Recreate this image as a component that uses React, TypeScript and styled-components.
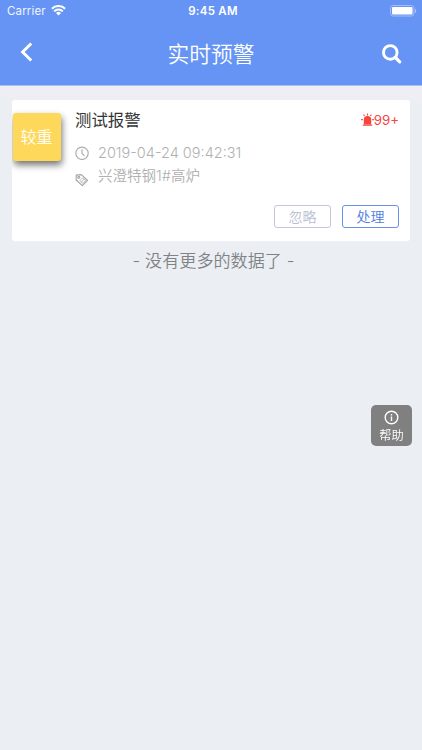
import React from "react";
import styled, { createGlobalStyle } from "styled-components";

const GlobalStyle = createGlobalStyle`
  * { box-sizing: border-box; }
  html, body, #root { height: 100%; }
  body {
    margin: 0;
    background: #ebeff4;
    font-family: Inter, "Noto Sans CJK SC", sans-serif;
    overflow: hidden;
  }
  button { font: inherit; padding: 0; background: none; border: 0; }
`;

const Screen = styled.div`
  min-height: 100%;
  display: flex;
  flex-direction: column;
  background: linear-gradient(#eeeef4 86px, #eeeef4 98px, #ebeff4 104px);
`;

const Header = styled.header`
  height: 86px;
  background: #6694f4;
  border-bottom: 1px solid #a9c0f3;
  color: #fff;
`;

const StatusBar = styled.div`
  height: 22px;
  padding: 0 5px 0 7px;
  display: grid;
  grid-template-columns: 1fr auto 1fr;
  align-items: center;
  font-size: 11.5px;
  line-height: 22px;
`;

const Carrier = styled.div`
  display: flex;
  align-items: center;
  gap: 5px;
  letter-spacing: 0.15px;
  color: #f0f5ff;
`;

const Clock = styled.div`
  margin-left: 2px;
  font-weight: 600;
  letter-spacing: 0.25px;
`;

const BatterySlot = styled.div`
  display: flex;
  justify-content: flex-end;
`;

const NavBar = styled.div`
  height: 63px;
  padding: 0 20px;
  display: grid;
  grid-template-columns: 1fr auto 1fr;
  align-items: center;
`;

const NavButton = styled.button<{ $end?: boolean }>`
  display: flex;
  justify-self: ${(p) => (p.$end ? "end" : "start")};
  padding-bottom: ${(p) => (p.$end ? 0 : 4)}px;
  color: #fff;
`;

const Title = styled.h1`
  margin: 0;
  font-size: 21.8px;
  line-height: 32px;
  font-weight: 350;
`;

const Card = styled.article`
  margin: 14px 12px 0;
  height: 141px;
  padding: 0 11px 0 1px;
  display: flex;
  background: #fff;
  border-radius: 3px;
  overflow: hidden;
`;

const Level = styled.div`
  flex: none;
  width: 48px;
  height: 48px;
  margin: 12.5px 14px 0 0;
  background: #fed85b;
  border-radius: 3px;
  box-shadow: 1px 4px 7px rgba(0, 0, 0, 0.55);
  color: #fff;
  font-size: 16px;
  line-height: 48px;
  text-align: center;
  text-indent: -1px;
  font-weight: 350;
`;

const Body = styled.div`
  flex: 1;
  display: flex;
  flex-direction: column;
`;

const Heading = styled.div`
  height: 38px;
  display: flex;
  align-items: center;
  justify-content: space-between;
  font-size: 16.4px;
  color: #333;
`;

const Count = styled.div`
  display: flex;
  align-items: center;
  color: #f8443f;
  font-size: 13.3px;
  line-height: 20px;
  padding-top: 1px;
`;

const Info = styled.div`
  height: 22px;
  display: flex;
  align-items: center;
  gap: 9px;
  color: #b0b0b0;
  font-size: 14.5px;
  font-weight: 350;
`;

const InfoList = styled.div`
  padding-top: 4px;
`;

const IconSlot = styled.span<{ $drop?: number }>`
  display: flex;
  width: 14px;
  padding-top: ${(p) => p.$drop ?? 0}px;
`;

const InfoText = styled.span`
  padding-bottom: 2px;
`;

const Actions = styled.div`
  margin-top: 19px;
  display: flex;
  justify-content: flex-end;
  gap: 11px;
`;

const Action = styled.button<{ $primary?: boolean }>`
  width: 57px;
  height: 23px;
  border: 1px solid ${(p) => (p.$primary ? "#6790ec" : "#c3c7dc")};
  border-radius: 3px;
  color: ${(p) => (p.$primary ? "#4f7be0" : "#b9bed2")};
  font-size: 14px;
  font-weight: 350;
  line-height: 20px;
`;

const EndNote = styled.p`
  margin: 8px 0 0 5px;
  font-size: 17.1px;
  line-height: 24px;
  font-weight: 350;
  color: #808285;
  text-align: center;
`;

const Help = styled.button`
  position: fixed;
  left: 371px;
  top: 405px;
  width: 41px;
  height: 41px;
  padding-top: 5px;
  display: flex;
  flex-direction: column;
  align-items: center;
  gap: 2px;
  border-radius: 5px;
  background: #808080;
  color: #fff;
  font-size: 12.2px;
  font-weight: 350;
  line-height: 18px;
`;

const WifiIcon = () => (
  <svg width="15" height="12" viewBox="0 0 15 12" fill="none" stroke="#fff" strokeWidth="2">
    <path d="M.9 3.7a9.4 9.4 0 0 1 13.2 0M3.2 6.4a6 6 0 0 1 8.6 0" />
    <path d="M7.5 10.4 5 8a3.5 3.5 0 0 1 5 0Z" fill="#fff" stroke="none" />
  </svg>
);

const BatteryIcon = () => (
  <svg width="27" height="12" viewBox="0 0 27 12">
    <rect x=".5" y=".5" width="23.5" height="10.5" rx="2.6" fill="none" stroke="#a3bef9" />
    <rect x="2" y="2" width="20.5" height="7.5" rx="1" fill="#fff" />
    <path d="M25 4v4c1.7-.6 1.7-3.4 0-4Z" fill="#b1c8fa" />
  </svg>
);

const BackIcon = () => (
  <svg width="13" height="20" viewBox="0 0 13 20" fill="none" stroke="#fff" strokeWidth="2.9">
    <path d="m11.2 1.5-8.6 8.5 8.6 8.5" />
  </svg>
);

const SearchIcon = () => (
  <svg width="20" height="20" viewBox="0 0 20 20" fill="none" stroke="#fff">
    <circle cx="8.3" cy="8.4" r="6.8" strokeWidth="2.9" />
    <path d="m13.4 13.5 4.3 4.3" strokeWidth="3.2" strokeLinecap="round" />
  </svg>
);

const ClockIcon = () => (
  <svg width="14" height="14" viewBox="0 0 14 14" fill="none" stroke="#aaa" strokeWidth="1.1">
    <circle cx="7" cy="7.3" r="6.2" />
    <path d="M7 3.3v4.2l2.5 2.3" />
  </svg>
);

const TagIcon = () => (
  <svg width="14" height="14" viewBox="0 0 14 14" fill="none" stroke="#a4a4a4" strokeWidth="1.1">
    <path d="M1.2 7V2.1L6.4 1.6 12.6 7.3 7.3 12.7Z" strokeLinejoin="round" />
    <circle cx="3.8" cy="4.2" r="1" />
    <path d="m5 7.5 2.9-2.9 3 2.9-3.2 3.1ZM6.4 9l3-3" strokeWidth=".8" />
  </svg>
);

const AlarmIcon = () => (
  <svg width="13" height="14" viewBox="0 0 13 14" fill="#f8443f">
    <path d="M2.8 11.2V6.7a3.7 3.7 0 0 1 7.4 0v4.5ZM1.8 11.4h9.4V12.8H1.8Z" />
    <path
      d="M6.5.4v2M2.6 1.6l1 1.4M10.4 1.6l-1 1.4M.1 6.6h1.7M11.2 6.6h1.7"
      fill="none"
      stroke="#f8443f"
      strokeWidth="1.1"
    />
  </svg>
);

const InfoIcon = () => (
  <svg width="15" height="15" viewBox="0 0 15 15" fill="none" stroke="#fff" strokeWidth="1.4">
    <circle cx="7.5" cy="7.5" r="6.3" />
    <path d="M7.5 6.6v4.3M7.5 4v1.4" />
  </svg>
);

export default function App() {
  return (
    <Screen>
      <GlobalStyle />
      <Header>
        <StatusBar>
          <Carrier>
            Carrier
            <WifiIcon />
          </Carrier>
          <Clock>9:45 AM</Clock>
          <BatterySlot>
            <BatteryIcon />
          </BatterySlot>
        </StatusBar>
        <NavBar>
          <NavButton aria-label="返回"><BackIcon /></NavButton>
          <Title>实时预警</Title>
          <NavButton $end aria-label="搜索"><SearchIcon /></NavButton>
        </NavBar>
      </Header>
      <Card>
        <Level>较重</Level>
        <Body>
          <Heading>
            测试报警
            <Count><AlarmIcon />99+</Count>
          </Heading>
          <InfoList>
            <Info>
              <IconSlot><ClockIcon /></IconSlot>
              <InfoText>2019-04-24 09:42:31</InfoText>
            </Info>
            <Info>
              <IconSlot $drop={9}><TagIcon /></IconSlot>
              <InfoText>兴澄特钢1#高炉</InfoText>
            </Info>
          </InfoList>
          <Actions>
            <Action>忽略</Action>
            <Action $primary>处理</Action>
          </Actions>
        </Body>
      </Card>
      <EndNote>- 没有更多的数据了 -</EndNote>
      <Help>
        <InfoIcon />
        帮助
      </Help>
    </Screen>
  );
}
